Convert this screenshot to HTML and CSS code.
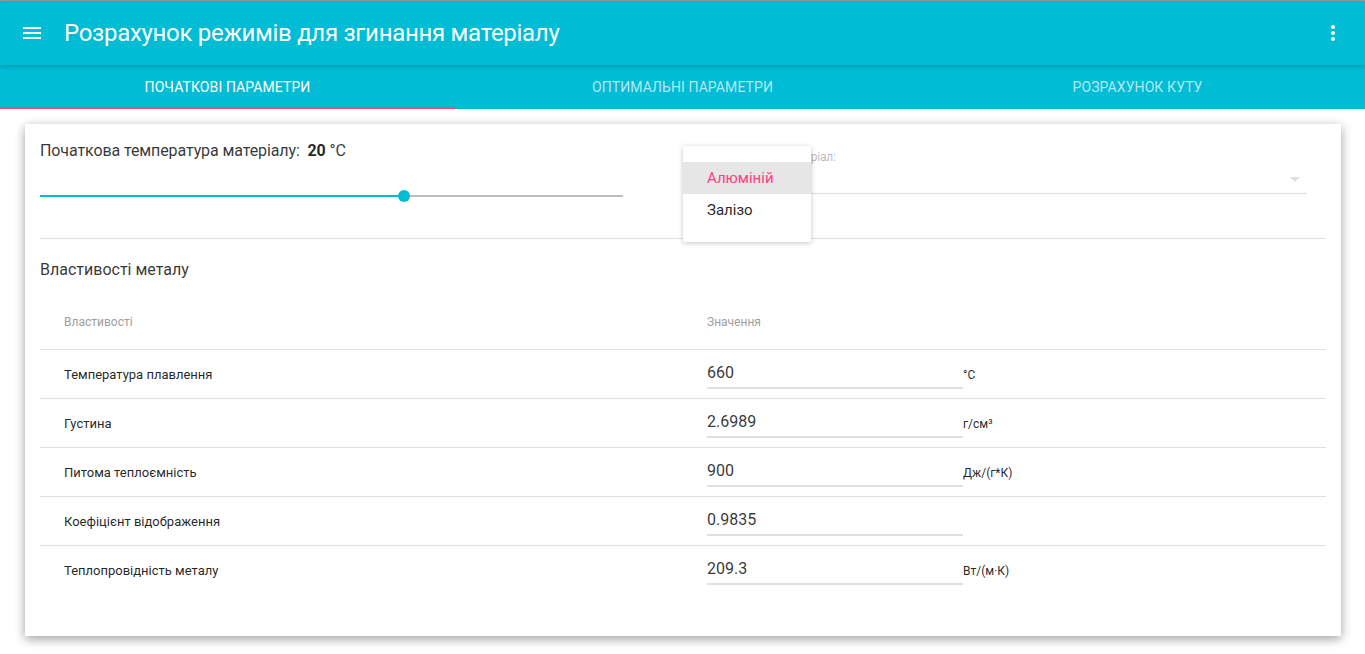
FILE: index.html
```html
<!DOCTYPE html>
<html lang="uk">
<head>
<meta charset="utf-8">
<title>Розрахунок режимів для згинання матеріалу</title>
<link rel="stylesheet" href="styles.css">
</head>
<body>
<div class="topline"></div>
<header class="appbar">
  <svg class="icon menu-icon" viewBox="0 0 24 24" width="24" height="24"><path d="M3 18h18v-2H3v2zm0-5h18v-2H3v2zm0-7v2h18V6H3z" fill="#fff"/></svg>
  <h1 class="title">Розрахунок режимів для згинання матеріалу</h1>
  <svg class="icon more-icon" viewBox="0 0 24 24" width="24" height="24"><path d="M12 8c1.1 0 2-.9 2-2s-.9-2-2-2-2 .9-2 2 .9 2 2 2zm0 2c-1.1 0-2 .9-2 2s.9 2 2 2 2-.9 2-2-.9-2-2-2zm0 6c-1.1 0-2 .9-2 2s.9 2 2 2 2-.9 2-2-.9-2-2-2z" fill="#fff"/></svg>
</header>
<nav class="tabs">
  <div class="tab active">Початкові параметри</div>
  <div class="tab">Оптимальні параметри</div>
  <div class="tab">Розрахунок куту</div>
  <div class="ink"></div>
</nav>
<main class="card">
  <section class="top">
    <div class="temp">
      <div class="temp-label">Початкова температура матеріалу:&nbsp; <b>20</b> °C</div>
      <div class="slider">
        <div class="track-fill" style="width:62.4%"></div>
        <div class="thumb" style="left:62.4%"></div>
      </div>
    </div>
    <div class="select">
      <div class="select-label">Виберіть бажаний матеріал:</div>
      <div class="select-field">
        <svg class="arrow" viewBox="0 0 24 24" width="24" height="24"><path d="M7 10l5 5 5-5z" fill="#e0e0e0"/></svg>
      </div>
      <ul class="menu">
        <li class="menu-item selected">Алюміній</li>
        <li class="menu-item">Залізо</li>
      </ul>
    </div>
  </section>
  <h2 class="subtitle">Властивості металу</h2>
  <div class="table">
    <div class="row head">
      <div class="cell">Властивості</div>
      <div class="cell">Значення</div>
    </div>
    <div class="row">
      <div class="cell name">Температура плавлення</div>
      <div class="cell value"><div class="field">660</div><span class="unit">°C</span></div>
    </div>
    <div class="row">
      <div class="cell name">Густина</div>
      <div class="cell value"><div class="field">2.6989</div><span class="unit">г/см³</span></div>
    </div>
    <div class="row">
      <div class="cell name">Питома теплоємність</div>
      <div class="cell value"><div class="field">900</div><span class="unit">Дж/(г*К)</span></div>
    </div>
    <div class="row">
      <div class="cell name">Коефіцієнт відображення</div>
      <div class="cell value"><div class="field">0.9835</div><span class="unit"></span></div>
    </div>
    <div class="row last">
      <div class="cell name">Теплопровідність металу</div>
      <div class="cell value"><div class="field">209.3</div><span class="unit">Вт/(м·К)</span></div>
    </div>
  </div>
</main>
</body>
</html>
```

FILE: styles.css
```css
* { box-sizing: border-box; }
html, body { margin: 0; padding: 0; }
body {
  font-family: Roboto, "Noto Sans", "Liberation Sans", sans-serif;
  background: #fff;
  color: rgba(0,0,0,0.87);
  width: 1365px;
  height: 654px;
  overflow: hidden;
}
.topline { height: 1px; background: #9e9e9e; }
.appbar {
  position: relative;
  z-index: 2;
  height: 64px;
  background: #00bcd4;
  display: flex;
  align-items: center;
  padding: 0 20px;
  box-shadow: 0 1px 6px rgba(0,0,0,0.12), 0 1px 4px rgba(0,0,0,0.12);
}
.icon { display: block; flex: none; }
.title {
  margin: 0 0 0 20px;
  font-size: 24px;
  font-weight: 400;
  color: #fff;
  flex: 1;
  line-height: 64px;
  letter-spacing: -0.3px;
}
.tabs {
  position: relative;
  z-index: 1;
  display: flex;
  height: 44px;
  background: #00bcd4;
}
.tab {
  flex: 1;
  text-align: center;
  font-size: 14px;
  text-transform: uppercase;
  color: rgba(255,255,255,0.7);
  line-height: 44px;
  letter-spacing: 0.1px;
}
.tab.active { color: #fff; }
.ink {
  position: absolute;
  left: 0;
  bottom: 0;
  width: 33.333%;
  height: 2px;
  background: #ff4081;
}
.card {
  margin: 15px 24px 0 25px;
  height: 512px;
  padding: 15px 15px;
  background: #fff;
  box-shadow: 0 3px 10px rgba(0,0,0,0.16), 0 3px 10px rgba(0,0,0,0.23);
}
.top {
  display: grid;
  grid-template-columns: 1fr 1fr;
  height: 100px;
  border-bottom: 1px solid #e0e0e0;
}
.temp-label {
  font-size: 16px;
  line-height: 24px;
  color: rgba(0,0,0,0.8);
  letter-spacing: -0.1px;
}
.temp-label b { font-weight: 700; color: rgba(0,0,0,0.87); }
.slider {
  position: relative;
  margin-top: 32px;
  width: calc(100% - 60px);
  height: 2px;
  background: #bdbdbd;
}
.track-fill {
  position: absolute;
  left: 0; top: 0; bottom: 0;
  background: #00bcd4;
}
.thumb {
  position: absolute;
  top: 50%;
  width: 12px;
  height: 12px;
  margin: -6px 0 0 -6px;
  border-radius: 50%;
  background: #00bcd4;
}
.select {
  position: relative;
  width: calc(100% - 19px);
}
.select-label {
  margin-top: 11px;
  font-size: 12px;
  line-height: 14px;
  color: rgba(0,0,0,0.3);
  letter-spacing: -0.2px;
}
.select-field {
  display: flex;
  align-items: center;
  justify-content: flex-end;
  height: 30px;
  margin-top: 0;
  border-bottom: 1px solid #e0e0e0;
}
.menu {
  position: absolute;
  left: 0;
  top: 7px;
  margin: 0;
  padding: 16px 0;
  list-style: none;
  width: 128px;
  background: #fff;
  border-radius: 2px;
  box-shadow: 0 1px 6px rgba(0,0,0,0.12), 0 1px 4px rgba(0,0,0,0.12);
}
.menu-item {
  height: 32px;
  line-height: 32px;
  padding: 0 24px;
  font-size: 15px;
  color: rgba(0,0,0,0.87);
}
.menu-item.selected {
  color: #ff4081;
  background: rgba(0,0,0,0.098);
}
.subtitle {
  margin: 19px 0 0;
  font-size: 16px;
  font-weight: 400;
  line-height: 24px;
  color: rgba(0,0,0,0.8);
}
.table { margin-top: 12px; }
.row {
  display: grid;
  grid-template-columns: 1fr 1fr;
  height: 49px;
  border-bottom: 1px solid #e0e0e0;
  align-items: center;
}
.row.head { height: 56px; }
.row.last { border-bottom: none; height: 48px; }
.cell { padding: 0 24px; }
.head .cell { font-size: 12px; color: #9e9e9e; }
.cell.name { font-size: 13px; color: rgba(0,0,0,0.87); }
.cell.value { display: flex; align-items: center; }
.field {
  width: 256px;
  flex: none;
  font-size: 16px;
  line-height: 22px;
  padding: 3px 0;
  border-bottom: 2px solid #e0e0e0;
  color: rgba(0,0,0,0.8);
}
.unit {
  font-size: 12px;
  color: rgba(0,0,0,0.87);
  padding-top: 2px;
}
```
